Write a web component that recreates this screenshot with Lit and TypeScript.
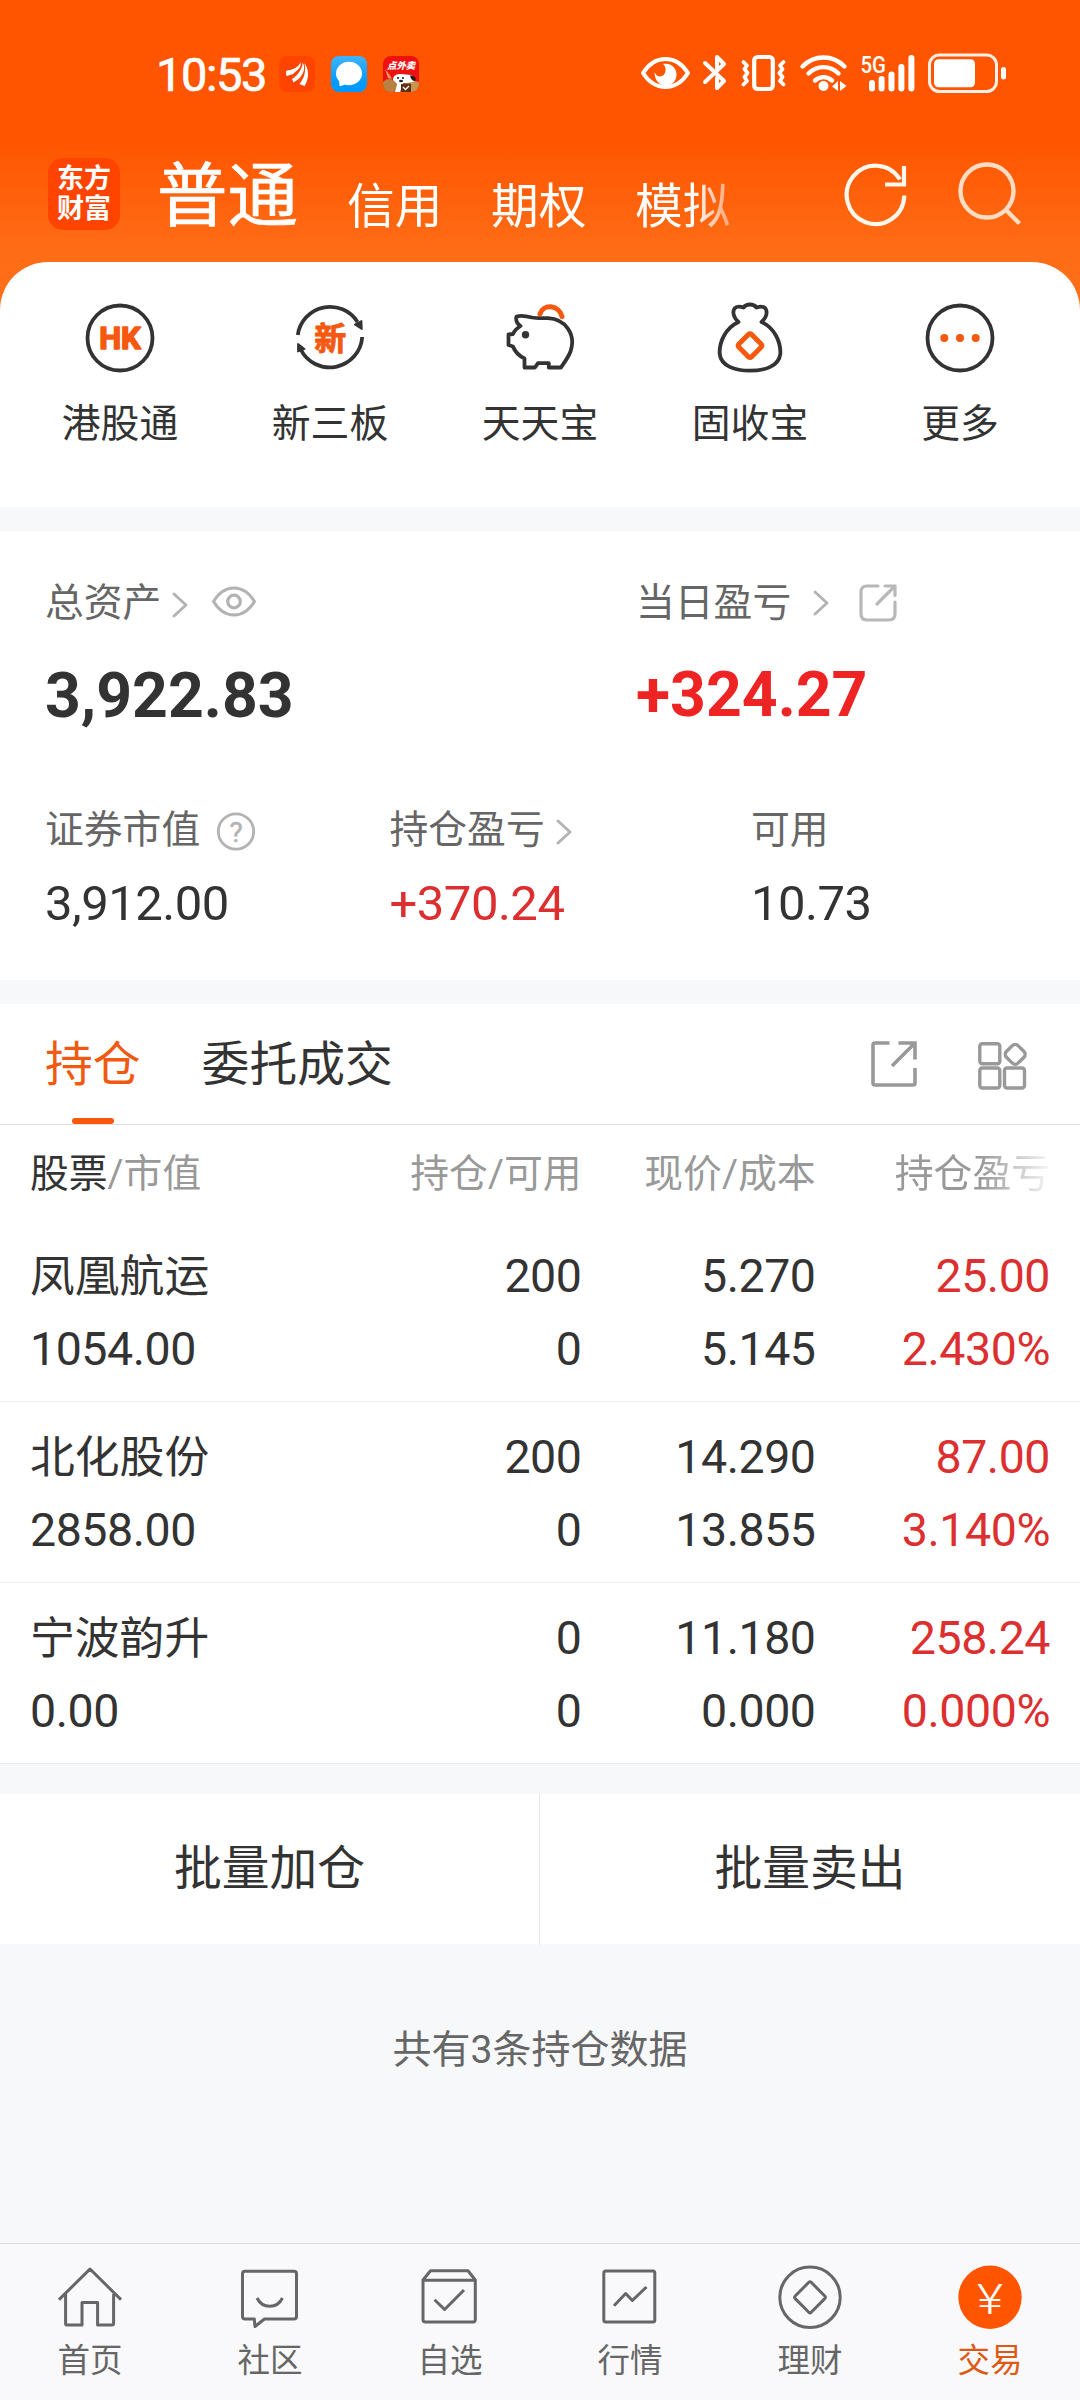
import { LitElement, html, svg, css, nothing } from "lit";
import { customElement, property } from "lit/decorators.js";
import { classMap } from "lit/directives/class-map.js";

const FONT = css`Roboto, "Noto Sans CJK SC", sans-serif`;

/* ---------- status bar ---------- */

@customElement("status-bar")
class StatusBar extends LitElement {
  static styles = css`
    :host { display: flex; align-items: flex-start; height: 145px; padding: 54px 72px 0 156px; box-sizing: border-box; font-family: ${FONT}; color: #fff; }
    svg { display: block; flex: none; overflow: visible; }
    .time { width: 123px; font-size: 47px; line-height: 42px; letter-spacing: -1.4px; font-weight: 400; -webkit-text-stroke: 0.7px #fff; white-space: nowrap; }
    .apps { display: flex; gap: 16px; padding-top: 2px; }
    .spring { flex: 1; }
    .sys { display: flex; }
    .bt { margin-left: 13px; }
    .vib { margin-left: 14px; }
    .wifi { margin-left: 14px; }
    .sig { margin-left: 14px; }
    .bat { margin-left: 13px; }
    .net { font-size: 24px; font-weight: 500; fill: #fff; }
    .promo { font-size: 9.4px; font-weight: 900; font-style: italic; fill: #fff; }
  `;
  render() {
    return html`
      <div class="time">10:53</div>
      <div class="apps">
        <svg width="36" height="36" viewBox="0 0 36 36">
          <rect width="36" height="36" rx="8" fill="#ff4400" />
          <path fill="#fff" d="M7 15C14 14 20 11 21.500 6C23 12 17 17 7 19.500Z" />
          <path fill="#fff" d="M13 23C19 19 23.500 13 23.500 6.500C28 13 23 22 14.500 26.500Z" />
          <path fill="#fff" d="M7 15L8 20L14 18L20 12Z" />
          <path fill="#fff" d="M20.500 28C26 21 27 14 25.500 7C30.500 14 30 23 25.500 30Z" />
        </svg>
        <svg width="36" height="36" viewBox="0 0 36 36">
          <defs>
            <linearGradient id="msg" x1="0" y1="0" x2="0" y2="1">
              <stop offset="0" stop-color="#3fb4fb" /><stop offset=".75" stop-color="#0099ff" />
            </linearGradient>
          </defs>
          <rect width="36" height="36" rx="8" fill="url(#msg)" />
          <ellipse cx="18" cy="17.500" rx="13" ry="11.800" fill="#fff" />
          <path d="M8 23L8.500 30C12 30 14 28.500 16 27Z" fill="#fff" />
        </svg>
        <svg width="36" height="36" viewBox="0 0 36 36">
          <defs><clipPath id="r"><rect width="36" height="36" rx="8" /></clipPath></defs>
          <g clip-path="url(#r)">
            <rect width="36" height="36" fill="#f01010" />
            <rect y="26" width="36" height="10" fill="#a8672c" />
            <circle cx="6" cy="30" r="7" fill="#b98142" />
            <circle cx="32" cy="31" r="6" fill="#c99352" />
            <path d="M2 13L6 18L9 23L5 22Z" fill="#f0a060" />
            <path d="M10 24C10 19 14 18 18 18L28 19C33 21 33 25 30 26L24 27L20 27L17 36H12L14 28Z" fill="#fff" />
            <path d="M27 19.500C31 19 34 22 32 25C29.500 25 27.500 23 27 19.500Z" fill="#2a1a14" />
            <circle cx="15" cy="22" r="1.100" fill="#222" /><circle cx="20" cy="22" r="1.100" fill="#222" />
            <ellipse cx="18" cy="25" rx="2" ry="1.200" fill="#222" />
            <rect x="18" y="28" width="10" height="8" fill="#5e2f12" />
            <path d="M20 31L22.500 33.500L26 30" fill="none" stroke="#fff" stroke-width="1.300" />
          </g>
          <text class="promo" x="4" y="13.200">点外卖</text>
        </svg>
      </div>
      <div class="spring"></div>
      <div class="sys">
        <svg width="49" height="40" viewBox="0 0 49 40">
          <path d="M2 19C8 9.500 16 5 24.500 5S41 9.500 47 19C41 28.500 33 33 24.500 33S8 28.500 2 19Z" fill="none" stroke="#fff" stroke-width="4" stroke-linejoin="round" />
          <path d="M22 10C31 8.500 36 15 35.500 21.500C35 28 30 31.500 25 31.500C18 31.500 13.500 26 13.500 18C15 22.500 20 24 23 20.500C25.500 17 25 12.500 22 10Z" fill="#fff" />
        </svg>
        <svg class="bt" width="24" height="40" viewBox="0 0 24 40">
          <path d="M2 9L21 27L14 34V24M14 15V3L21 10L2 28" fill="none" stroke="#fff" stroke-width="4" stroke-linecap="round" stroke-linejoin="round" />
        </svg>
        <svg class="vib" width="45" height="40" viewBox="0 0 45 40">
          <rect x="13.200" y="3" width="18.600" height="32" rx="3.500" fill="none" stroke="#fff" stroke-width="4.200" />
          <path d="M2.500 8L6 11.500L3.500 15L6.500 19L3.500 23L6 27L2.500 30.500M42.500 8L39 11.500L41.500 15L38.500 19L41.500 23L39 27L42.500 30.500" fill="none" stroke="#fff" stroke-width="3.800" stroke-linecap="round" stroke-linejoin="round" />
        </svg>
        <svg class="wifi" width="47" height="40" viewBox="0 0 47 40">
          <path d="M2.500 12.500C14 .500 33 .500 44.500 12.500M8.500 19.500C17 11 30 11 38.500 19.500M15 26.500C20 22 27 22 32 26.500" fill="none" stroke="#fff" stroke-width="4.400" stroke-linecap="round" />
          <circle cx="23.500" cy="32" r="5" fill="#fff" />
          <path d="M38 27V37L32 32.500ZM40 27L46.500 32L40 37Z" fill="#fff" />
        </svg>
        <svg class="sig" width="54" height="40" viewBox="0 0 54 40">
          <text class="net" x="-.500" y="18.500" textLength="25.500" lengthAdjust="spacingAndGlyphs">5G</text>
          <rect x="8" y="26" width="6" height="11.500" rx="3" fill="#fff" />
          <rect x="17.600" y="22" width="6" height="15.500" rx="3" fill="#fff" />
          <rect x="27.500" y="17.500" width="6" height="20" rx="3" fill="#fff" />
          <rect x="37.400" y="10" width="6" height="27.500" rx="3" fill="#fff" />
          <rect x="47.400" y="1" width="6" height="36.500" rx="3" fill="#fff" />
        </svg>
        <svg class="bat" width="80" height="40" viewBox="0 0 80 40">
          <rect x="1.500" y="1" width="67" height="36.500" rx="10" fill="none" stroke="#fff" stroke-opacity=".9" stroke-width="3" />
          <rect x="6" y="5.300" width="41" height="28" rx="4.500" fill="#fff" />
          <rect x="73" y="13" width="5" height="12.500" rx="2.500" fill="#fff" />
        </svg>
      </div>
    `;
  }
}

/* ---------- header ---------- */

@customElement("account-header")
class AccountHeader extends LitElement {
  static styles = css`
    :host { display: flex; align-items: flex-start; height: 117px; padding: 0 48px; box-sizing: border-box; font-family: ${FONT}; color: #fff; }
    svg { display: block; flex: none; }
    .logo { width: 72px; height: 72px; margin-top: 13px; border-radius: 15px; background: #ff4400; flex: none; box-sizing: border-box; padding: 6px 9px 0; font-size: 27px; line-height: 30px; font-weight: 700; white-space: nowrap; }
    .tabs { display: flex; align-items: flex-start; flex: none; margin-left: 37px; width: 601px; white-space: nowrap;
      -webkit-mask-image: linear-gradient(90deg, #000 0, #000 536px, transparent 600px);
      mask-image: linear-gradient(90deg, #000 0, #000 536px, transparent 600px); }
    .main { flex: none; margin-top: 2px; font-size: 70.500px; line-height: 100px; width: 190px; -webkit-text-stroke: 0.7px #fff; }
    .tab { flex: none; margin-top: 32px; font-size: 47.700px; line-height: 60px; width: 144px; }
    .refresh { margin: 17px 0 0 85px; }
    .search { margin: 13px 0 0 46px; }
  `;
  render() {
    return html`
      <div class="logo">东方<br />财富</div>
      <div class="tabs">
        <div class="main">普通</div>
        <div class="tab">信用</div>
        <div class="tab">期权</div>
        <div class="tab">模拟</div>
      </div>
      <svg class="refresh" width="66" height="66" viewBox="0 0 66 66">
        <path d="M61.300 33.500A28.800 29.200 0 1 1 57 17.500M61 4V22.500H42" fill="none" stroke="#fff6ec" stroke-width="4.200" />
      </svg>
      <svg class="search" width="70" height="70" viewBox="0 0 70 70">
        <g fill="none" stroke="#ffdcc2" stroke-width="4.400">
          <circle cx="32" cy="33" r="26.500" /><path d="M51 52L64.500 65.500" />
        </g>
      </svg>
    `;
  }
}

/* ---------- quick entries ---------- */

const INK = "#333333";
const ORANGE = "#f5590f";

const quickIcons = {
  hk: svg`
    <circle cx="36" cy="36" r="32.500" fill="none" stroke=${INK} stroke-width="3.800" />
    <text x="36" y="47" class="hk">HK</text>`,
  board: svg`
    <path d="M3.800 33A32.500 32.500 0 0 1 63.500 20M68.200 35A32.500 32.500 0 0 1 6.500 47" fill="none" stroke=${INK} stroke-width="3.800" />
    <path d="M67.500 19L67.800 27L60.800 22.500Z M4 42L10.500 47L4 49.500Z" fill=${INK} stroke=${INK} stroke-width="1.800" stroke-linejoin="round" />
    <text x="36.300" y="47.500" class="xin">新</text>`,
  pig: svg`
    <path d="M28 15.500C22 14 16 13.500 12.500 14.500C11.500 18 13 21.500 16.500 24C12.500 26.500 10.500 28.500 9 32L4.500 32.500V43L9 44.500C11 50 15.500 54 20.500 56.500V65.500H31L34 61.200H44.800V65.500H57C60 61 64.500 55 66.500 49.500C72.500 32 61 17 44 16.200C39 16 33 16.500 28 15.500Z" fill="none" stroke=${INK} stroke-width="3.800" stroke-linejoin="round" />
    <circle cx="21.500" cy="32.700" r="3.700" fill=${INK} />
    <path d="M36 12C39 2 54.500 2 58 14.500" fill="none" stroke=${ORANGE} stroke-width="5" stroke-linecap="round" />`,
  bag: svg`
    <path d="M24.500 20C19 15.500 18.500 9.500 20.500 6.500C22.500 4 26.500 4.500 29.500 5.500C32.500 1.500 39.500 1.500 42.500 5.500C45.500 4.500 49.500 4 51.500 6.500C53.500 9.500 53 15.500 47.500 20C60.500 26 67 40 66.300 52C65 64 51 68.700 36 68.700S7 64 5.700 52C5 40 11.500 26 24.500 20Z" fill="none" stroke=${INK} stroke-width="3.800" stroke-linejoin="round" />
    <rect x="27" y="34.600" width="18" height="18" rx="2" transform="rotate(45 36 43.600)" fill="none" stroke=${ORANGE} stroke-width="5" />`,
  more: svg`
    <circle cx="36" cy="36" r="32.500" fill="none" stroke=${INK} stroke-width="3.800" />
    <g fill=${ORANGE}><circle cx="20.300" cy="36" r="4" /><circle cx="36" cy="36" r="4" /><circle cx="51.700" cy="36" r="4" /></g>`,
};

@customElement("quick-entries")
class QuickEntries extends LitElement {
  static styles = css`
    :host { display: grid; grid-template-columns: repeat(5, 1fr); height: 245px; padding: 40px 15px 0; box-sizing: border-box; background: #fff; border-radius: 48px 48px 0 0; font-family: ${FONT}; color: #333; }
    .entry { display: flex; flex-direction: column; align-items: center; }
    .label { margin-top: 20px; font-size: 38.800px; line-height: 60px; }
    svg { display: block; overflow: visible; }
    .hk { font-size: 31px; font-weight: 700; text-anchor: middle; fill: #f5590f; stroke: #f5590f; stroke-width: 1.6; stroke-linejoin: round; }
    .xin { font-size: 32px; font-weight: 700; text-anchor: middle; fill: #f5590f; stroke: #f5590f; stroke-width: .9; stroke-linejoin: round; }
  `;
  render() {
    const items: [keyof typeof quickIcons, string][] = [
      ["hk", "港股通"], ["board", "新三板"], ["pig", "天天宝"], ["bag", "固收宝"], ["more", "更多"],
    ];
    return items.map(([icon, label]) => html`
      <div class="entry">
        <svg width="72" height="72" viewBox="0 0 72 72">${quickIcons[icon]}</svg>
        <div class="label">${label}</div>
      </div>`);
  }
}

/* ---------- asset summary ---------- */

const chevron = html`<svg width="16" height="26" viewBox="0 0 16 26"><path d="M2 2L14 13L2 24" fill="none" stroke="#b3b3b3" stroke-width="3" stroke-linecap="round" stroke-linejoin="round" /></svg>`;

@customElement("asset-summary")
class AssetSummary extends LitElement {
  static styles = css`
    :host { display: block; height: 449px; padding: 42px 45px 0; box-sizing: border-box; background: #fff; font-family: ${FONT}; color: #333; }
    svg { display: block; flex: none; overflow: visible; }
    .top { display: grid; grid-template-columns: 591px 1fr; height: 205px; }
    .bottom { display: grid; grid-template-columns: 344.500px 361.500px 1fr; padding-top: 22px; }
    .label { display: flex; align-items: center; height: 60px; font-size: 38.800px; line-height: 60px; color: #666; white-space: nowrap; }
    .big { margin-top: 23px; font-size: 62.500px; line-height: 80px; font-weight: 700; }
    .big.up { margin-top: 22px; }
    .mid { margin-top: 14px; font-size: 49px; line-height: 60px; letter-spacing: -.5px; }
    .up { color: #ee2424; }
    .mid.up { color: #dc2f2f; }
    .c1 { margin: 3px 0 0 11px; }
    .eye { margin-left: 24px; margin-top: -2px; }
    .c2 { margin-left: 22px; }
    .ext { margin-left: 30px; }
    .help { margin: 2px 0 0 17px; }
    .c3 { margin: 3px 0 0 11px; }
    .q { font-size: 28px; text-anchor: middle; fill: #b3b3b3; stroke: #b3b3b3; stroke-width: .5; }
  `;
  render() {
    return html`
      <div class="top">
        <div>
          <div class="label">总资产<span class="c1">${chevron}</span>
            <svg class="eye" width="44" height="32" viewBox="0 0 44 32">
              <path d="M1.500 15.500C7 6.500 14 2 22 2S37 6.500 42.500 15.500C37 24.500 30 29 22 29S7 24.500 1.500 15.500Z" fill="none" stroke="#b3b3b3" stroke-width="3" stroke-linejoin="round" />
              <circle cx="22" cy="15.500" r="6.300" fill="none" stroke="#b3b3b3" stroke-width="3.200" />
            </svg>
          </div>
          <div class="big">3,922.83</div>
        </div>
        <div>
          <div class="label">当日盈亏<span class="c2">${chevron}</span>
            <svg class="ext" width="38" height="38" viewBox="0 0 38 38">
              <path d="M19 2H8Q2 2 2 8V30Q2 36 8 36H30Q36 36 36 30V18M26 2H36V11.500M36 2L18 20" fill="none" stroke="#b8b8b8" stroke-width="3.200" stroke-linecap="round" stroke-linejoin="round" />
            </svg>
          </div>
          <div class="big up">+324.27</div>
        </div>
      </div>
      <div class="bottom">
        <div>
          <div class="label">证券市值
            <svg class="help" width="38" height="38" viewBox="0 0 38 38">
              <circle cx="19" cy="19.500" r="17.700" fill="none" stroke="#b3b3b3" stroke-width="2.800" />
              <text class="q" x="19" y="29.500">?</text>
            </svg>
          </div>
          <div class="mid">3,912.00</div>
        </div>
        <div>
          <div class="label">持仓盈亏<span class="c3">${chevron}</span></div>
          <div class="mid up">+370.24</div>
        </div>
        <div>
          <div class="label">可用</div>
          <div class="mid">10.73</div>
        </div>
      </div>
    `;
  }
}

/* ---------- holdings ---------- */

interface Holding { name: string; value: string; held: string; free: string; price: string; cost: string; gain: string; rate: string; }

const HOLDINGS: Holding[] = [
  { name: "凤凰航运", value: "1054.00", held: "200", free: "0", price: "5.270", cost: "5.145", gain: "25.00", rate: "2.430%" },
  { name: "北化股份", value: "2858.00", held: "200", free: "0", price: "14.290", cost: "13.855", gain: "87.00", rate: "3.140%" },
  { name: "宁波韵升", value: "0.00", held: "0", free: "0", price: "11.180", cost: "0.000", gain: "258.24", rate: "0.000%" },
];

@customElement("holdings-panel")
class HoldingsPanel extends LitElement {
  @property({ attribute: false }) rows: Holding[] = [];
  static styles = css`
    :host { display: block; background: #fff; font-family: ${FONT}; color: #333; }
    svg { display: block; flex: none; overflow: visible; }
    .tabs { display: flex; align-items: flex-start; height: 121px; padding: 0 52px 0 45px; box-sizing: border-box; border-bottom: 1px solid #dedede; font-size: 47.800px; }
    .tab { display: flex; flex-direction: column; align-items: center; height: 120px; box-sizing: border-box; padding-top: 30px; line-height: 62px; margin-right: 61px; }
    .tab.on { color: #ef5a12; }
    .bar { margin-top: 22px; width: 42px; height: 6px; border-radius: 3px; background: #f9580c; }
    .spring { flex: 1; }
    .open { margin: 37px 61px 0 0; }
    .apps { margin-top: 38px; }
    .cols { display: grid; grid-template-columns: 252px 299.500px 234px 234.500px; padding-left: 30px; text-align: right; }
    .head { height: 96px; font-size: 38.800px; line-height: 98px; color: #999; white-space: nowrap; }
    .head b { font-weight: 400; color: #333; }
    .first { text-align: left; white-space: nowrap; }
    .fade { -webkit-mask-image: linear-gradient(90deg, #000 0, #000 165px, rgba(0,0,0,.1) 233px); mask-image: linear-gradient(90deg, #000 0, #000 165px, rgba(0,0,0,.1) 233px); }
    .row { height: 181px; box-sizing: border-box; padding-top: 18.500px; border-bottom: 1px solid #ebebeb; font-size: 46.500px; line-height: 73px; letter-spacing: -.45px; }
    .name { font-size: 44.800px; letter-spacing: 0; }
    .up { color: #dc2f2f; }
  `;
  render() {
    return html`
      <div class="tabs">
        <div class="tab on">持仓<div class="bar"></div></div>
        <div class="tab">委托成交</div>
        <div class="spring"></div>
        <svg class="open" width="46" height="46" viewBox="0 0 46 46">
          <path d="M18.500 2H4Q2 2 2 4V42Q2 44 4 44H42Q44 44 44 42V27M27.500 2H44V18.500M44 2L21 25" fill="none" stroke="#999" stroke-width="3.600" />
        </svg>
        <svg class="apps" width="50" height="48" viewBox="0 0 50 48">
          <g fill="none" stroke="#999" stroke-width="3.400">
            <rect x="1.800" y="1.800" width="20" height="20" rx="2.500" />
            <rect x="1.800" y="26" width="20" height="20" rx="2.500" />
            <rect x="26.500" y="26" width="20" height="20" rx="2.500" />
            <rect x="29" y="4.200" width="16.400" height="16.400" rx="4" transform="rotate(45 37.200 12.400)" />
          </g>
        </svg>
      </div>
      <div class="cols head">
        <div class="first"><b>股票</b>/市值</div>
        <div>持仓/可用</div>
        <div>现价/成本</div>
        <div class="fade">持仓盈亏</div>
      </div>
      ${this.rows.map((r) => html`
        <div class="cols row">
          <div class="first"><div class="name">${r.name}</div><div>${r.value}</div></div>
          <div><div>${r.held}</div><div>${r.free}</div></div>
          <div><div>${r.price}</div><div>${r.cost}</div></div>
          <div class="up"><div>${r.gain}</div><div>${r.rate}</div></div>
        </div>`)}
    `;
  }
}

/* ---------- bottom navigation ---------- */

const navIcons = {
  home: svg`<path d="M1 34.700L32 4L63 34.700M7.600 29V58.500Q7.600 60 9 60H24V37.500H39.600V60H54Q55.600 60 55.600 58.500V29" />`,
  chat: svg`<path d="M7 6.300H56Q58.500 6.300 58.500 9V51.500Q58.500 54 56 54H26.500L17 61.500L16.300 54H7Q4.500 54 4.500 51.500V9Q4.500 6.300 7 6.300Z" /><path d="M19 33C24.500 44 39 44 44.500 33" />`,
  pick: svg`<path d="M5 15L12.500 5.800H50L57.300 15V54.500Q57.300 57 55 57H7.500Q5 57 5 54.500ZM5 15.300H57.300M16.600 34.700L26.600 44.500L46 25" />`,
  chart: svg`<rect x="5.800" y="6" width="51" height="51" rx="2" /><path d="M16 40.700L27.700 28.500L34.300 35.500L48.500 22" />`,
  coin: svg`<circle cx="32" cy="32.300" r="30.200" /><path d="M30.800 17.300Q32 16.200 33.200 17.300L46.800 31Q48 32.300 46.800 33.600L33.200 47.300Q32 48.400 30.800 47.300L17.200 33.600Q16 32.300 17.200 31Z" />`,
  trade: svg`<circle cx="32" cy="32.300" r="31.700" fill="#ff5500" stroke="none" /><text x="19" y="49" textLength="26" lengthAdjust="spacingAndGlyphs" class="yen">¥</text>`,
};

@customElement("bottom-nav")
class BottomNav extends LitElement {
  static styles = css`
    :host { display: grid; grid-template-columns: repeat(6, 1fr); height: 157px; padding-top: 21px; box-sizing: border-box; border-top: 1px solid #dfdfe1; background: #f9f9fb; font-family: ${FONT}; color: #666; }
    .item { display: flex; flex-direction: column; align-items: center; font-size: 32.500px; line-height: 40px; }
    .item.on { color: #dc5a14; }
    .label { margin-top: 12px; }
    svg { display: block; fill: none; stroke: #666; stroke-width: 3; stroke-linejoin: round; }
    .yen { font-size: 42px; font-weight: 300; fill: #fff; stroke: none; }
  `;
  render() {
    const items: [keyof typeof navIcons, string][] = [
      ["home", "首页"], ["chat", "社区"], ["pick", "自选"], ["chart", "行情"], ["coin", "理财"], ["trade", "交易"],
    ];
    return items.map(([icon, label]) => html`
      <div class=${classMap({ item: true, on: icon === "trade" })}>
        <svg width="64" height="64" viewBox="0 0 64 64">${navIcons[icon] ?? nothing}</svg>
        <div class="label">${label}</div>
      </div>`);
  }
}

/* ---------- page ---------- */

@customElement("app-root")
class AppRoot extends LitElement {
  static styles = css`
    :host { display: flex; flex-direction: column; width: 1080px; height: 2400px; overflow: hidden; background: #f7f8fa; font-family: ${FONT}; color: #333; }
    .hero { background: linear-gradient(180deg, #ff5500 0, #ff5500 140px, #ff6c16 250px, #ff6f1a 320px); }
    .assets { margin-top: 24px; }
    .holdings { margin-top: 24px; }
    .batch { display: grid; grid-template-columns: 539px 1fr; height: 150px; margin-top: 30px; background: #fff; font-size: 47.800px; line-height: 151px; text-align: center; }
    .batch div + div { border-left: 1px solid #e8e8ea; }
    .count { margin-top: 76px; font-size: 39px; line-height: 60px; text-align: center; color: #666; }
    .nav { margin-top: auto; }
  `;
  render() {
    return html`
      <div class="hero">
        <status-bar></status-bar>
        <account-header></account-header>
        <quick-entries></quick-entries>
      </div>
      <asset-summary class="assets"></asset-summary>
      <holdings-panel class="holdings" .rows=${HOLDINGS}></holdings-panel>
      <div class="batch"><div>批量加仓</div><div>批量卖出</div></div>
      <div class="count">共有3条持仓数据</div>
      <bottom-nav class="nav"></bottom-nav>
    `;
  }
}
